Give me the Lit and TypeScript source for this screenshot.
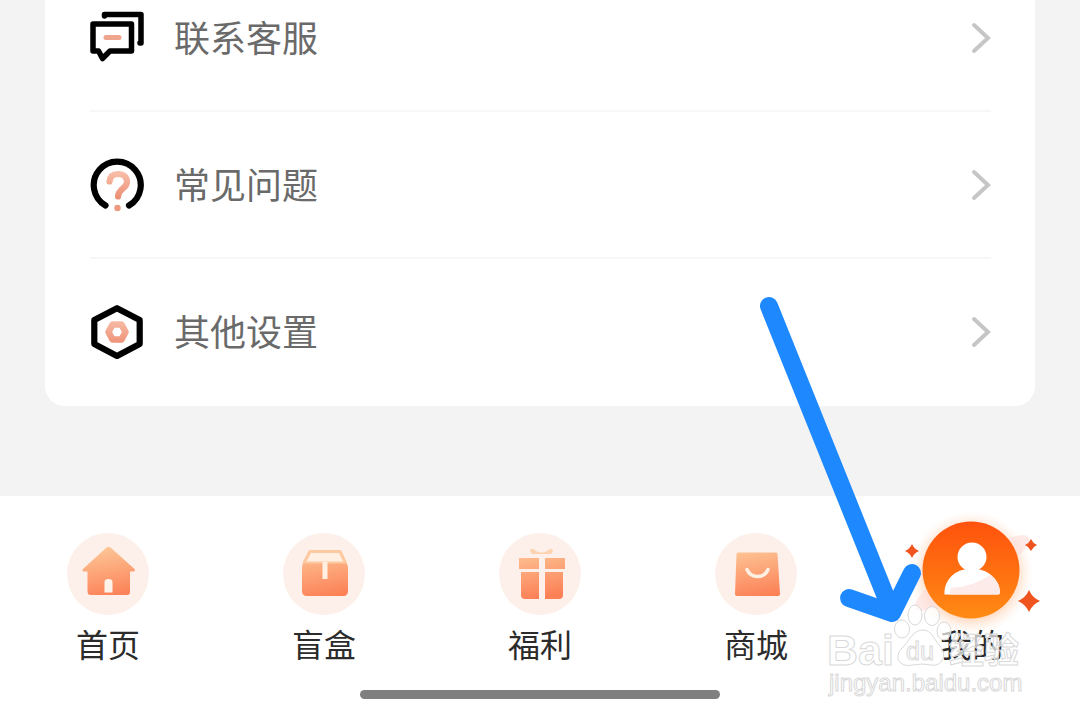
import { LitElement, html, svg, css } from "lit";
import { customElement } from "lit/decorators.js";
import { classMap } from "lit/directives/class-map.js";

const chatIcon = svg`
  <g fill="none" stroke="#000" stroke-width="5.500" stroke-linejoin="round" stroke-linecap="round">
    <path d="M14.500 6V4.500H51V33H50"/>
    <path d="M3 14H41.500V41H20L12.500 48.500L8.500 41H3Z"/>
    <path d="M16 27.500H29" stroke="#efa48e" stroke-width="5"/>
  </g>`;

const questionIcon = svg`
  <path d="M15.500 48.500A23.500 23.500 0 1 1 39 48.500" fill="none" stroke="#000" stroke-width="6.200" stroke-linecap="round"/>
  <path d="M19.500 24.500C20 19 23.500 17 28 17C34 17 37 20.500 37 25C37 31.500 28.500 31.500 28 39.500" fill="none" stroke="url(#tint)" stroke-width="6.200" stroke-linecap="round"/>
  <circle cx="27.500" cy="51" r="3.200" fill="#ec9a80"/>`;

const hexIcon = svg`
  <path d="M27 4.200L49.700 16V40L27 52L4.300 40V16Z" fill="none" stroke="#000" stroke-width="6.200" stroke-linejoin="round"/>
  <path d="M22.500 20.500H31.500L35.500 28L31.500 35.500H22.500L18.500 28Z" fill="none" stroke="url(#tint)" stroke-width="6.500" stroke-linejoin="round"/>`;

const homeIcon = svg`
  <path d="M39.500 14.500Q41.500 13 43.500 14.500L67.500 36Q69 38.500 66 38.500H63V59Q63 62 60 62H24Q20.500 62 20.500 58.500V38.500H17Q14.500 38.500 16 36Z" fill="url(#warm)"/>
  <path d="M37.500 59.500V49Q37.500 46 41.500 46Q45.500 46 45.500 49V59.500Z" fill="#fff3ea"/>`;

const boxIcon = svg`
  <path d="M27 18.500H57L62.500 30H21Z" fill="#fff0e3" stroke="#fdc9a0" stroke-width="3" stroke-linejoin="round"/>
  <path d="M20 30.500H63.500Q65 32 65 35V58Q65 63 60 63H24Q19 63 19 58V35Q19 32 20 30.500Z" fill="url(#warm)"/>
  <path d="M39.500 29H44.500V46H39.500Z" fill="#fff0e3"/>`;

const giftIcon = svg`
  <path d="M32 16Q34 15 37 18Q42.500 21 48 18Q51 15 53 16Q55 18 52 21H33Q30 18 32 16Z" fill="#fdd3b1"/>
  <path d="M20 25H40V36H20ZM46 25H66V36H46Z" fill="url(#warm)"/>
  <path d="M22 39H40V66H26Q22 66 22 62ZM46 39H64V62Q64 66 60 66H46Z" fill="url(#warm)"/>`;

const bagIcon = svg`
  <path d="M23 19.500H61.500Q62.500 19.500 62.500 21L65 61Q65 63 63 63H22Q20 63 20 61L21.500 21Q21.500 19.500 23 19.500Z" fill="url(#warm)"/>
  <path d="M32 36.500Q35 43.500 42.500 43.500Q50 43.500 53 36.500" fill="none" stroke="#fff0e3" stroke-width="3.500" stroke-linecap="round"/>`;

const star = (x: number, y: number, r: number) => {
  const k = r * 0.3;
  return svg`<path fill="#f0541e" d="M${x} ${y - r}Q${x + k} ${y - k} ${x + r} ${y}Q${x + k} ${y + k} ${x} ${y + r}Q${x - k} ${y + k} ${x - r} ${y}Q${x - k} ${y - k} ${x} ${y - r}Z"/>`;
};

const meIcon = svg`
  <circle cx="40" cy="40" r="62" fill="url(#halo)"/>
  <ellipse cx="41" cy="40" rx="67" ry="15" transform="rotate(-32 41 40)" fill="#fbdcd9" opacity=".6"/>
  <circle cx="40" cy="37" r="48.500" fill="url(#hot)"/>
  <path d="M13.500 61.500C13 46 25 37.500 34 36.500C29 33.500 26.500 29 26.500 24A14.500 14.500 0 0 1 55.500 24C55.500 29 53 33.500 48 36.500C58 38 69 47 69 59.500Q69 61.500 67 61.500Z" fill="#fff"/>
  <path d="M18 61.500L20 55Q42 54 59 42Q69 49 69 59.500Q69 61.500 67 61.500Z" fill="#fdebe9"/>
  ${star(-19, 18, 7)}${star(100, 12, 6)}${star(98, 68, 11)}`;

const rows = [
  { label: "联系客服", icon: chatIcon },
  { label: "常见问题", icon: questionIcon },
  { label: "其他设置", icon: hexIcon },
];

const tabs = [
  { label: "首页", icon: homeIcon },
  { label: "盲盒", icon: boxIcon },
  { label: "福利", icon: giftIcon },
  { label: "商城", icon: bagIcon },
  { label: "我的", icon: meIcon, current: true },
];

@customElement("app-root")
export class AppRoot extends LitElement {
  static styles = css`
    :host {
      display: flex;
      flex-direction: column;
      position: relative;
      height: 100vh;
      overflow: hidden;
      background: #f3f3f3;
      font-family: "Noto Sans CJK SC", "Noto Sans", sans-serif;
    }
    .content {
      flex: 1;
      min-height: 0;
      display: flex;
      flex-direction: column;
      justify-content: flex-end;
      padding: 0 45px 90px;
    }
    .card {
      flex: none;
      background: #fff;
      border-radius: 20px;
      padding: 0 44px 0 45px;
    }
    .row {
      display: flex;
      align-items: center;
      height: 145px;
      border-bottom: 2px solid #f7f7f7;
      color: #6a6a6a;
      font-size: 36px;
      line-height: 48px;
      text-decoration: none;
    }
    .row:last-child {
      border-bottom-color: transparent;
    }
    .row-icon {
      width: 56px;
      height: 56px;
      margin-right: 28px;
    }
    .row-label {
      flex: 1;
      padding-bottom: 3px;
    }
    .chevron {
      width: 20px;
      height: 32px;
    }
    .bar {
      flex: none;
      background: #fff;
      padding: 37px 0 21px;
    }
    .tabs {
      display: flex;
    }
    .tab {
      flex: 1;
      display: flex;
      flex-direction: column;
      align-items: center;
      gap: 8px;
      color: #2b2b2b;
      font-size: 32px;
      line-height: 40px;
      text-decoration: none;
    }
    .disc {
      width: 82px;
      height: 82px;
      border-radius: 50%;
      background: #fdf0eb;
    }
    .disc.current {
      background: none;
    }
    .tab-icon {
      display: block;
      width: 82px;
      height: 82px;
      overflow: visible;
    }
    .indicator {
      width: calc(100% / 3);
      height: 9px;
      margin: 27px auto 0;
      border-radius: 5px;
      background: #7f7f7f;
    }
    .overlay {
      position: absolute;
      right: 0;
      bottom: 0;
      width: 320px;
      height: 440px;
      pointer-events: none;
    }
    .defs {
      position: absolute;
      width: 0;
      height: 0;
    }
    .mark {
      font-family: "Liberation Sans", sans-serif;
      fill: #fff;
      fill-opacity: 0.7;
      stroke: #d9d9d9;
      stroke-width: 1px;
    }
    .mark-latin {
      font-size: 43px;
      font-weight: 700;
    }
    .mark-du {
      font-size: 25px;
    }
    .mark-han {
      font-family: "Noto Sans CJK SC", sans-serif;
      font-size: 35px;
      font-weight: 700;
    }
    .mark-url {
      font-size: 24px;
    }
  `;

  render() {
    return html`
      <svg class="defs" aria-hidden="true">
        <defs>
          <linearGradient id="tint" gradientUnits="userSpaceOnUse" x1="0" y1="16" x2="0" y2="42">
            <stop offset="0" stop-color="#f8bda8" />
            <stop offset="1" stop-color="#ec8d72" />
          </linearGradient>
          <linearGradient id="warm" gradientUnits="userSpaceOnUse" x1="30" y1="14" x2="40" y2="66">
            <stop offset="0" stop-color="#fdc899" />
            <stop offset="1" stop-color="#fc7f55" />
          </linearGradient>
          <linearGradient id="hot" x1="0" y1="0" x2="0" y2="1">
            <stop offset="0" stop-color="#ff520d" />
            <stop offset="1" stop-color="#ff8b14" />
          </linearGradient>
          <radialGradient id="halo">
            <stop offset="0.7" stop-color="#ffb98a" stop-opacity="0.6" />
            <stop offset="1" stop-color="#ffe3cf" stop-opacity="0" />
          </radialGradient>
        </defs>
      </svg>
      <main class="content">
        <div class="card">
          ${rows.map(
            (row) => html`
              <a class="row" href="#">
                <svg class="row-icon" viewBox="0 0 56 56" aria-hidden="true">${row.icon}</svg>
                <span class="row-label">${row.label}</span>
                <svg class="chevron" viewBox="0 0 20 32" aria-hidden="true">
                  <path d="M3 3L17 16L3 29" fill="none" stroke="#c6c6c6" stroke-width="4" stroke-linecap="round" />
                </svg>
              </a>
            `
          )}
        </div>
      </main>
      <footer class="bar">
        <nav class="tabs">
          ${tabs.map(
            (tab) => html`
              <a class="tab" href="#">
                <span class=${classMap({ disc: true, current: !!tab.current })}>
                  <svg class="tab-icon" viewBox="0 0 82 82" aria-hidden="true">${tab.icon}</svg>
                </span>
                <span>${tab.label}</span>
              </a>
            `
          )}
        </nav>
        <div class="indicator"></div>
      </footer>
      <svg class="overlay" viewBox="760 280 320 440" aria-hidden="true">
        <g fill="none" stroke="#1e88ff" stroke-width="18" stroke-linecap="round" stroke-linejoin="round">
          <path d="M769 306L892 612" />
          <path d="M849 598L892 613L912 573" />
        </g>
        <g class="mark">
          <ellipse cx="902" cy="629" rx="7.500" ry="9" />
          <ellipse cx="915" cy="615" rx="7" ry="10" />
          <ellipse cx="932" cy="616" rx="7.500" ry="9.500" />
          <ellipse cx="944" cy="631" rx="7" ry="9" />
          <path d="M923 630C932 630 934 640 940 646C948 655 942 667 931 665Q922 663 913 665C898 668 894 656 902 648C910 641 912 630 923 630Z" />
          <text class="mark-latin" x="827" y="665">Bai</text>
          <text class="mark-du" x="906" y="660">du</text>
          <text class="mark-han" x="949" y="663">经验</text>
          <text class="mark-url" x="829" y="691">jingyan.baidu.com</text>
        </g>
      </svg>
    `;
  }
}
